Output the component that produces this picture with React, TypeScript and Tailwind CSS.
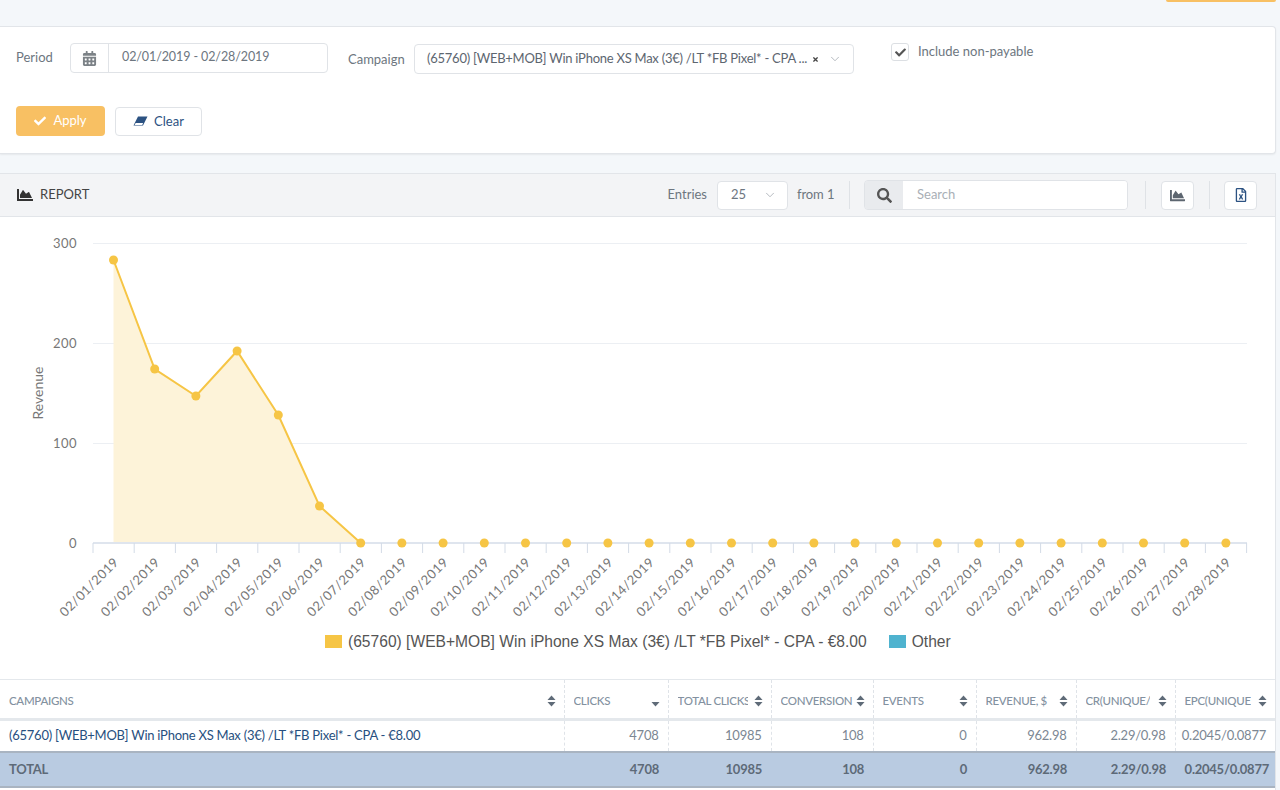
import { ChevronDown } from "lucide-react"
import { FaCalendarAlt, FaChartArea, FaCheck, FaRegFileExcel, FaSearch, FaTimes } from "react-icons/fa"

const chartFont = "Lato, 'Noto Sans', sans-serif"
const dates = Array.from({ length: 28 }, (_, i) => `02/${String(i + 1).padStart(2, "0")}/2019`)
const values = [283, 174, 147, 192, 128, 37, ...Array(22).fill(0)]
const pointX = (i: number) => 113.5 + i * 41.2
const pointY = (v: number) => 326 - v

function Chart() {
  const line = values.slice(0, 7).map((v, i) => `${pointX(i)},${pointY(v)}`).join(" ")
  return (
    <svg width="1276" height="400" className="block">
      {[26, 126, 226].map((y) => (
        <line key={y} x1="93" x2="1247" y1={y + 0.5} y2={y + 0.5} stroke="#eceff3" />
      ))}
      {[["300", 26], ["200", 126], ["100", 226], ["0", 326]].map(([t, y]) => (
        <text key={t} x="77" y={Number(y) + 5} textAnchor="end" fontSize="13" fill="#777" letterSpacing="0.5" fontFamily={chartFont}>
          {t}
        </text>
      ))}
      <text transform="translate(43 176) rotate(-90)" textAnchor="middle" fontSize="14" fill="#777" fontFamily={chartFont}>
        Revenue
      </text>
      <polygon points={`${pointX(0)},326 ${line}`} fill="#fdf3d9" />
      <polyline points={line} fill="none" stroke="#f6c545" strokeWidth="2" />
      <line x1="93" x2="1247" y1="326" y2="326" stroke="#dfe5ee" strokeWidth="2" />
      {Array.from({ length: 29 }, (_, i) => (
        <line key={i} x1={93 + i * 41.2} x2={93 + i * 41.2} y1="326" y2="336" stroke="#d3dbe6" />
      ))}
      {values.map((v, i) => (
        <circle key={i} cx={pointX(i)} cy={pointY(v)} r="4.5" fill="#f6c545" />
      ))}
      {dates.map((d, i) => (
        <text
          key={d}
          transform={`translate(${pointX(i) + 6} 346) rotate(-45)`}
          textAnchor="end"
          fontSize="13"
          letterSpacing="0.5"
          fill="#777"
          fontFamily={chartFont}
        >
          {d}
        </text>
      ))}
    </svg>
  )
}

function Sort({ down }: { down?: boolean }) {
  return (
    <svg width="9" height="12" viewBox="0 0 9 12" className="shrink-0">
      {!down && <path d="M4.5 0.5 8.5 5H0.5Z" fill="#5f6b78" />}
      <path d="M0.5 7H8.5L4.5 11.5Z" fill="#5f6b78" />
    </svg>
  )
}

function Eraser() {
  return (
    <svg width="15" height="12" viewBox="0 0 15 12">
      <path d="M5 0.5H14.5L10 9.5H0.5Z" fill="#2c5282" />
      <path d="M2.6 7 1.6 9 H9.2 L10.2 7Z" fill="#fff" />
    </svg>
  )
}

const columns = [
  { name: "CLICKS", w: "w-[104px]", text: "w-[70px]", down: true },
  { name: "TOTAL CLICKS", w: "w-[103px]", text: "w-[70px]" },
  { name: "CONVERSION", w: "w-[102px]", text: "w-[73px]" },
  { name: "EVENTS", w: "w-[103px]", text: "w-[70px]" },
  { name: "REVENUE, $", w: "w-[100px]", text: "w-[68px]" },
  { name: "CR(UNIQUE/GROSS)", w: "w-[99px]", text: "w-[64px]" },
  { name: "EPC(UNIQUE/GROSS)", w: "w-[100px]", text: "w-[66px]" },
]
const row = ["4708", "10985", "108", "0", "962.98", "2.29/0.98", "0.2045/0.0877"]

function Table() {
  return (
    <table className="w-[1275px] table-fixed border-collapse text-[13px] tracking-[-0.25px]">
      <thead>
        <tr className="h-[40px] border-t border-b-[3px] border-[#e4e8ec] text-[11.5px] tracking-[-0.3px] text-[#8391a0]">
          <th className="w-[564px] border-r border-dashed border-[#dfe3e8] pt-[3px] pr-[8px] pl-[9px] font-medium">
            <div className="flex items-center justify-between">
              <span>CAMPAIGNS</span>
              <Sort />
            </div>
          </th>
          {columns.map((c, i) => (
            <th
              key={c.name}
              className={`${c.w} pt-[3px] pr-[8px] pl-[9px] font-medium ${i < columns.length - 1 ? "border-r border-dashed border-[#dfe3e8]" : ""}`}
            >
              <div className="flex items-center justify-between">
                <span className={`${c.text} overflow-hidden text-left whitespace-nowrap`}>{c.name}</span>
                <Sort down={c.down} />
              </div>
            </th>
          ))}
        </tr>
      </thead>
      <tbody>
        <tr className="h-[32px] text-[#7c8793]">
          <td className="border-r border-dashed border-[#dfe3e8] pl-[9px] text-[#274f80]">
            (65760) [WEB+MOB] Win iPhone XS Max (3€) /LT *FB Pixel* - CPA - €8.00
          </td>
          {row.map((v, i) => (
            <td
              key={i}
              className={`pr-[9px] text-right whitespace-nowrap ${i < row.length - 1 ? "border-r border-dashed border-[#dfe3e8]" : ""}`}
            >
              {v}
            </td>
          ))}
        </tr>
        <tr className="h-[35px] border-y-2 border-t-[#a9b4c1] border-b-[#a9b4c1] bg-[#b9cbe1] font-bold text-[#5d6a78]">
          <td className="pt-[1px] pl-[9px]">TOTAL</td>
          {row.map((v, i) => (
            <td key={i} className={`pt-[1px] text-right whitespace-nowrap ${i === row.length - 1 ? "pr-[6px]" : "pr-[9px]"}`}>
              {v}
            </td>
          ))}
        </tr>
      </tbody>
    </table>
  )
}

export default function App() {
  return (
    <div className="h-[790px] w-[1280px] overflow-hidden bg-[#f4f7fa] font-['Lato','Noto_Sans',sans-serif] text-[13px] text-[#6d7680]">
      <div className="flex h-[26px] justify-end pr-[4px]">
        <div className="h-[2px] w-[110px] rounded-b-sm bg-[#f8c063]" />
      </div>

      <section className="mr-[4px] h-[128px] rounded-r-sm border-y border-r border-[#e2e5e9] bg-white pl-[16px] shadow-[0_1px_2px_rgba(0,0,0,0.06)]">
        <div className="flex h-[79px] items-start pt-[16px]">
          <span className="w-[54px] pt-[5px]">Period</span>
          <div className="flex h-[30px] w-[258px] rounded-sm border border-[#e0e3e7]">
            <span className="flex w-[38px] items-center justify-center border-r border-[#e0e3e7]">
              <FaCalendarAlt className="h-[15px] w-[15px] text-[#7c8287]" />
            </span>
            <span className="pl-[13px] text-[12.5px] leading-[26px] tracking-[-0.1px]">02/01/2019 - 02/28/2019</span>
          </div>
          <span className="ml-[20px] w-[66px] pt-[7px]">Campaign</span>
          <div className="mt-[1px] flex h-[30px] w-[440px] items-center rounded-sm border border-[#e0e3e7] pr-[11px] pl-[12px] text-[#5d6670]">
            <span className="flex-1 tracking-[-0.25px] whitespace-nowrap">(65760) [WEB+MOB] Win iPhone XS Max (3€) /LT *FB Pixel* - CPA ...</span>
            <FaTimes className="mr-[9px] h-[7px] w-[7px] text-[#444]" />
            <ChevronDown className="h-[14px] w-[14px] text-[#9aa1a8]" strokeWidth={1.25} />
          </div>
          <span className="ml-[37px] flex h-[18px] w-[18px] items-center justify-center rounded-[3px] border border-[#dcdfe3]">
            <FaCheck className="h-[11px] w-[11px] text-[#555]" />
          </span>
          <span className="ml-[9px] leading-[16px]">Include non-payable</span>
        </div>
        <div className="flex items-start gap-[10px]">
          <button className="flex h-[30px] w-[89px] items-center justify-center gap-[7px] rounded-sm bg-[#f8c063] text-white">
            <FaCheck className="h-[12px] w-[12px]" />
            Apply
          </button>
          <button className="mt-[1px] flex h-[29px] w-[87px] items-center justify-center gap-[6px] rounded-sm border border-[#e0e3e7] text-[#2c5282]">
            <Eraser />
            Clear
          </button>
        </div>
      </section>

      <section className="mt-[19px] mr-[4px] h-[700px] border-t border-r border-[#e2e5e9] bg-white">
        <header className="flex h-[43px] items-center border-b border-[#e2e5e9] bg-[#f3f4f6] pl-[17px] text-[#6d7680]">
          <FaChartArea className="h-[16px] w-[16px] text-[#333]" />
          <span className="ml-[7px] text-[#444]">REPORT</span>
          <span className="ml-auto">Entries</span>
          <div className="ml-[10px] flex h-[29px] w-[71px] items-center justify-between rounded-sm border border-[#e0e3e7] bg-white pr-[10px] pl-[13px]">
            25
            <ChevronDown className="h-[14px] w-[14px] text-[#9aa1a8]" strokeWidth={1.25} />
          </div>
          <span className="ml-[9px] w-[37px] tracking-[-0.1px] whitespace-nowrap">from 1</span>
          <span className="ml-[15px] h-[28px] w-px bg-[#dfe2e6]" />
          <div className="ml-[14px] flex h-[30px] w-[264px] overflow-hidden rounded-sm border border-[#e0e3e7]">
            <span className="flex w-[38px] items-center justify-center bg-[#e9ebee]">
              <FaSearch className="h-[15px] w-[15px] text-[#555]" />
            </span>
            <span className="flex-1 bg-white pl-[14px] leading-[26px] text-[#a9afb6]">Search</span>
          </div>
          <span className="ml-[17px] h-[28px] w-px bg-[#dfe2e6]" />
          <span className="ml-[15px] flex h-[29px] w-[33px] items-center justify-center rounded-sm border border-[#e0e3e7] bg-white">
            <FaChartArea className="h-[15px] w-[15px] text-[#5d6670]" />
          </span>
          <span className="ml-[15px] h-[28px] w-px bg-[#dfe2e6]" />
          <span className="mr-[18px] ml-[14px] flex h-[29px] w-[33px] items-center justify-center rounded-sm border border-[#e0e3e7] bg-white">
            <FaRegFileExcel className="h-[14px] w-[14px] text-[#2c5282]" />
          </span>
        </header>
        <Chart />
        <div className="flex h-[62px] items-start pt-[16px] pl-[325px] font-['Liberation_Sans',sans-serif] text-[15.6px] leading-[17px] text-[#555]">
          <span className="mt-[2px] h-[13px] w-[17px] bg-[#f6c545]" />
          <span className="ml-[6px]">(65760) [WEB+MOB] Win iPhone XS Max (3€) /LT *FB Pixel* - CPA - €8.00</span>
          <span className="mt-[2px] ml-[22px] h-[13px] w-[17px] bg-[#4fb3cf]" />
          <span className="ml-[6px]">Other</span>
        </div>
        <Table />
      </section>
    </div>
  )
}
